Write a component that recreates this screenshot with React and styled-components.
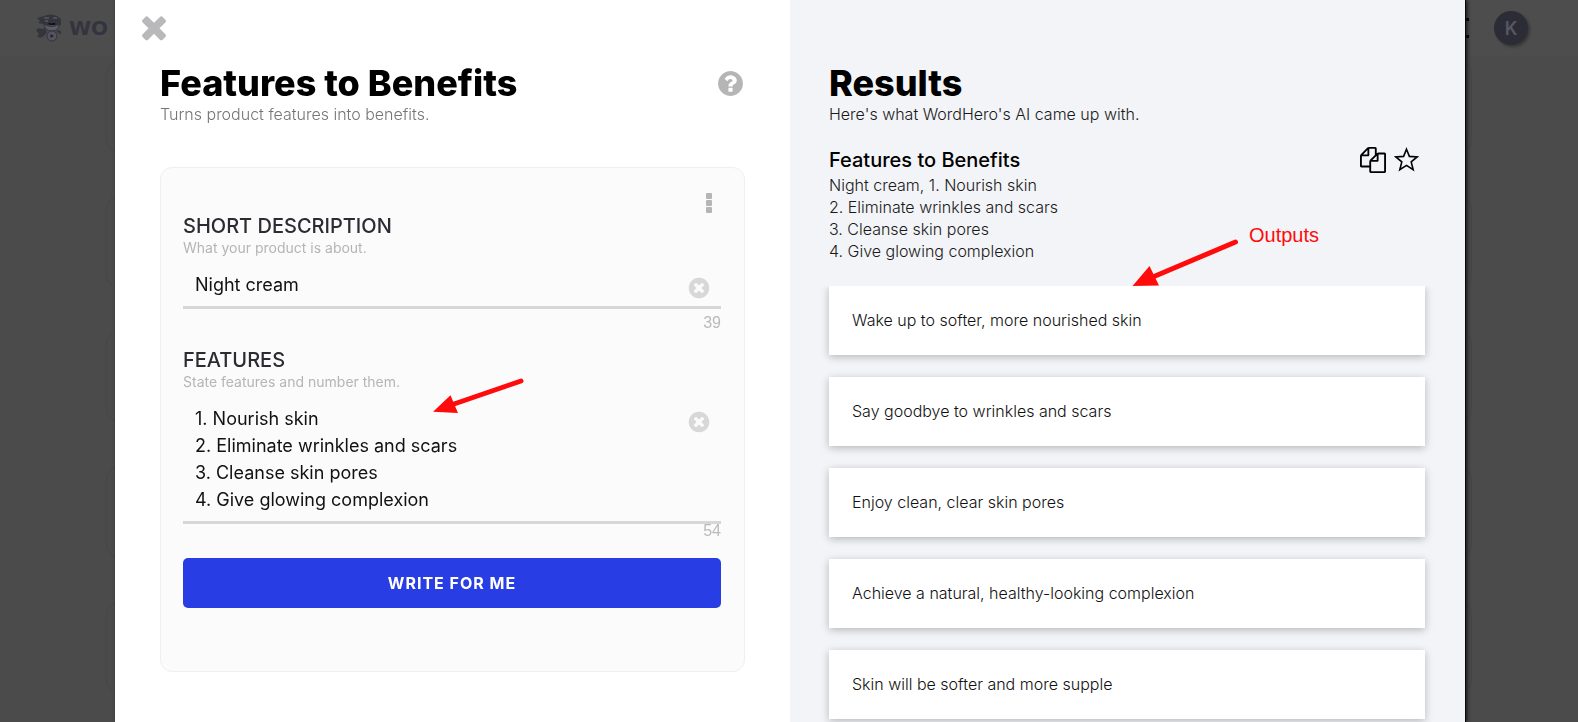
import { useState } from 'react';
import styled, { createGlobalStyle } from 'styled-components';


const GlobalStyle = createGlobalStyle`
  * { box-sizing: border-box; }
  body { margin: 0; overflow: hidden; background-color: #4b4b4b; font-family: Inter, "Liberation Sans", sans-serif; color: #000; }
  h1, h2, p, ul { margin: 0; padding: 0; }
  button { padding: 0; border: 0; background: none; font-family: inherit; cursor: pointer; }
  svg { display: block; }
`

const Page = styled.div`
  height: 100vh;  overflow: hidden;
`

const TopBar = styled.header`
  display: flex;  align-items: center;  justify-content: space-between;
  height: 56px;  padding: 0 50px 0 36px;
  background-color: #4d4d4d;
`

const Brand = styled.div`
  display: flex;  align-items: center;  column-gap: 7px;
  color: #34343f;  font: bold 20px "DejaVu Sans", sans-serif;
`

const TopBarRight = styled.div`
  display: flex;  align-items: center;  column-gap: 25px;
`

const Avatar = styled.div`
  display: flex;  align-items: center;  justify-content: center;
  width: 34px;  height: 34px;  border-radius: 50%;
  background-color: #2c2c37;  color: #575761;  box-shadow: 2px 2px 3px rgba(0,0,0,.3);
  font-size: 18px;  font-weight: 600;
`

const ToolList = styled.div`
  display: flex;  flex-direction: column;  row-gap: 45px;
  padding: 6px 106px 0;
`

const Tool = styled.div`
  height: 90px;  flex-shrink: 0;
  border: 1px solid #464646;  border-radius: 12px;
`

const Modal = styled.div`
  position: fixed;  inset: 0 113px 0 115px;
  display: grid;  grid-template-columns: 1fr 1fr;
  background-color: #fff;
  box-shadow: 1px 0 0 #08080a, 2px 0 4px #111;
`

const FormPanel = styled.section`
  position: relative;  min-width: 0;
`

const CloseRow = styled.div`
  display: flex;  padding: 9px 21px;
`

const FormBody = styled.div`
  padding: 9px 45px 0;
`

const TitleRow = styled.div`
  display: flex;  align-items: center;  justify-content: space-between;
`

const Title = styled.h1`
  font-size: 36px;  line-height: 40px;  font-weight: 800;
`

const Subtitle = styled.p`
  font-size: 16px;  line-height: 22px;  font-weight: 300;
  color: ${props => props.$color || '#1a1a1a'};
`

const FormCard = styled.form`
  display: flex;  flex-direction: column;
  margin-top: 42px;  padding: 24px 23px 63px 22px;
  background-color: #fbfbfb;  border: 1px solid #efefef;  border-radius: 12px;
`

const MoreButton = styled.button`
  align-self: flex-end;
  height: 22px;  margin-right: 9px;
`

const Label = styled.label`
  font-size: 20px;  line-height: 24px;  font-weight: 500;  color: #2b2b31;
`

const Hint = styled.p`
  margin-bottom: 13px;
  font-size: 14px;  line-height: 20px;  color: #b5b5b5;
`

const Field = styled.div`
  display: flex;  align-items: flex-start;
  padding: 0 10px 6px 12px;  border-bottom: 3px solid #d7d7d7;
`

const TextInput = styled.input`
  flex: 1;  min-width: 0;  height: 27px;  padding: 0;
  border: 0;  outline: 0;  background: none;
  font: 400 18px/27px Inter, sans-serif;  color: #111;
`

const TextArea = styled.textarea`
  flex: 1;  min-width: 0;  height: 110px;  padding: 0 0 2px;  resize: none;  overflow: hidden;
  border: 0;  outline: 0;  background: none;
  font: 400 18px/27px Inter, sans-serif;  color: #111;
`

const ClearButton = styled.button`
  margin-top: 5px;
`

const Count = styled.div`
  margin: ${props => props.$tight ? '0 0 20px' : '7px 0 18px'};
  font-family: "Liberation Sans", sans-serif;  font-size: 16px;  line-height: 14px;
  text-align: right;  color: #bababa;
`

const SubmitButton = styled.button`
  height: 50px;  border-radius: 5px;
  background-color: #283ee4;  color: #fff;
  font-size: 16px;  font-weight: 700;  letter-spacing: 1px;
`

const ResultPanel = styled.section`
  position: relative;  display: flex;  flex-direction: column;
  min-width: 0;  min-height: 0;
  background-color: #f3f4f8;
`

const ResultHead = styled.div`
  padding: 63px 40px 24px 39px;
`

const QueryRow = styled.div`
  display: flex;  align-items: center;  justify-content: space-between;
  height: 27px;  margin: 21px 0 1px;
`

const QueryTitle = styled.h2`
  font-size: 20px;  line-height: 24px;  font-weight: 500;
`

const QueryActions = styled.div`
  display: flex;  align-items: center;  column-gap: 8px;
  padding-right: 6px;
`

const QueryText = styled.p`
  font-size: 16px;  line-height: 22px;  font-weight: 300;  white-space: pre-line;  color: #1a1a1a;
`

const ResultList = styled.ul`
  flex: 1;  min-height: 0;  overflow: hidden;
  display: flex;  flex-direction: column;  row-gap: 22px;
  padding: 0 40px 0 39px;  list-style: none;
`

const Result = styled.li`
  display: flex;  align-items: center;  flex-shrink: 0;
  height: 69px;  padding: 0 23px 2px;
  background-color: #fff;  box-shadow: 0 2px 8px rgba(0,0,0,.25);
  font-size: 16px;  font-weight: 300;  color: #111;
`

// red hand-placed notes that float over the panels
const Note = styled.div`
  position: absolute;  left: ${props => props.$left}px;  top: ${props => props.$top}px;
  display: flex;  align-items: flex-start;  column-gap: 10px;
  pointer-events: none;
  font: 20px/22px "Liberation Sans", sans-serif;  color: #ff0b0b;
`

const NoteText = styled.span`
  margin-top: -14px;
`


const PATHS = {
  times: 'M1490 1322q0 40-28 68l-136 136q-28 28-68 28t-68-28l-294-294-294 294q-28 28-68 28t-68-28l-136-136q-28-28-28-68t28-68l294-294-294-294q-28-28-28-68t28-68l136-136q28-28 68-28t68 28l294 294 294-294q28-28 68-28t68 28l136 136q28 28 28 68t-28 68l-294 294 294 294q28 28 28 68z',
  question: 'M1024 1376v-192q0-14-9-23t-23-9h-192q-14 0-23 9t-9 23v192q0 14 9 23t23 9h192q14 0 23-9t9-23zm256-672q0-88-55.5-163t-138.5-116-170-41q-243 0-371 213-15 24 8 42l132 100q7 6 19 6 16 0 25-12 53-68 86-92 34-24 86-24 48 0 85.5 26t37.5 59q0 38-20 61t-68 45q-63 28-115.5 86.5t-52.5 125.5v36q0 14 9 23t23 9h192q14 0 23-9t9-23q0-19 21.5-49.5t54.5-49.5q32-18 49-28.5t46-35 44.5-48 28-60.5 12.5-81zm384 192q0 209-103 385.5t-279.5 279.5-385.5 103-385.5-103-279.5-279.5-103-385.5 103-385.5 279.5-279.5 385.5-103 385.5 103 279.5 279.5 103 385.5z',
  clear: 'M1277 1122q0-26-19-45l-181-181 181-181q19-19 19-45 0-27-19-46l-90-90q-19-19-46-19-26 0-45 19l-181 181-181-181q-19-19-45-19-27 0-46 19l-90 90q-19 19-19 46 0 26 19 45l181 181-181 181q-19 19-19 45 0 27 19 46l90 90q19 19 46 19 26 0 45-19l181-181 181 181q19 19 45 19 27 0 46-19l90-90q19-19 19-46zm387-226q0 209-103 385.5t-279.5 279.5-385.5 103-385.5-103-279.5-279.5-103-385.5 103-385.5 279.5-279.5 385.5-103 385.5 103 279.5 279.5 103 385.5z',
  copy: 'M1696 384q40 0 68 28t28 68v1216q0 40-28 68t-68 28h-960q-40 0-68-28t-28-68v-288h-544q-40 0-68-28t-28-68v-672q0-40 20-88t48-76l408-408q28-28 76-48t88-20h416q40 0 68 28t28 68v328q68-40 128-40h416zm-544 213l-299 299h299v-299zm-640-384l-299 299h299v-299zm196 647l316-316v-416h-384v416q0 40-28 68t-68 28h-416v640h512v-256q0-40 20-88t48-76zm956 804v-1152h-384v416q0 40-28 68t-68 28h-416v640h896z',
}

function Icon({ name, size, color }) {
  return (
    <svg width={size} height={size} viewBox="0 0 1792 1792" fill={color} aria-hidden="true"><path d={PATHS[name]}/></svg>
  )
}

function Dots() {
  return (
    <svg width="6" height="22" viewBox="0 0 6 22" fill="#b5b5b5" aria-hidden="true">
      <rect y="1" width="6" height="6" rx="1"/><rect y="8" width="6" height="6" rx="1"/><rect y="15" width="6" height="6" rx="1"/>
    </svg>
  )
}

function Star() {
  return (
    <svg width="25" height="25" viewBox="0 0 25 25" fill="none" stroke="#000" strokeWidth="1.6" aria-hidden="true">
      <path d="M12.5 2.2 15.4 9.4 23.2 9.9 17.2 14.9 19.2 22.7 12.5 18.4 5.8 22.7 7.8 14.9 1.8 9.9 9.6 9.4Z"/>
    </svg>
  )
}

function Mascot() {
  return (
    <svg width="26" height="28" viewBox="0 0 26 28" aria-hidden="true">
      <path d="M1 4 8 2Q14-1 21 2L25 5V11L21 12 18 11H9L7 10 2 9 4 7Z" fill="#34343f"/>
      <path d="M8 4H13M17 4H21M9 7H12" stroke="#6a6a72" strokeWidth="1"/>
      <path d="M8 10Q15 15 23 10Q23 17 16 17Q9 17 8 10Z" fill="#5c5c66" stroke="#34343f" strokeWidth="1"/>
      <path d="M12 10Q14 8 15.5 10Q17 8 20 10Q16 12 12 10Z" fill="#0c0c10"/>
      <path d="M0 16 3 14 6 15 9 14 11 18 8 22 4 24 1 22 3 20Z" fill="#34343f"/>
      <circle cx="16" cy="22" r="5" fill="#555560" stroke="#34343f" strokeWidth="1"/>
      <path d="M14.5 20 18 22 14.5 24Z" fill="#22222b"/>
      <path d="M21 18Q25 16 24 20" fill="none" stroke="#34343f" strokeWidth="2"/>
    </svg>
  )
}

function Burger() {
  return (
    <svg width="26" height="24" viewBox="0 0 26 24" fill="#000" aria-hidden="true">
      <rect y="2" width="26" height="3"/><rect y="10" width="20" height="3"/><rect y="19" width="26" height="3"/>
    </svg>
  )
}


const RESULTS = [
  'Wake up to softer, more nourished skin',
  'Say goodbye to wrinkles and scars',
  'Enjoy clean, clear skin pores',
  'Achieve a natural, healthy-looking complexion',
  'Skin will be softer and more supple',
]

const FEATURES = '1. Nourish skin\n2. Eliminate wrinkles and scars\n3. Cleanse skin pores\n4. Give glowing complexion'


function Form() {
  const [description, setDescription] = useState('Night cream')
  const [features, setFeatures] = useState(FEATURES)

  return (
    <FormPanel>
      <CloseRow>
        <button type="button" aria-label="Close"><Icon name="times" size={36} color="#b9b9bb"/></button>
      </CloseRow>
      <FormBody>
        <TitleRow>
          <Title>Features to Benefits</Title>
          <button type="button" aria-label="Help"><Icon name="question" size={29} color="#b5b5b5"/></button>
        </TitleRow>
        <Subtitle $color="#757575">Turns product features into benefits.</Subtitle>
        <FormCard onSubmit={e => e.preventDefault()}>
          <MoreButton type="button" aria-label="More"><Dots/></MoreButton>
          <Label htmlFor="description">SHORT DESCRIPTION</Label>
          <Hint>What your product is about.</Hint>
          <Field>
            <TextInput id="description" value={description} onChange={e => setDescription(e.target.value)}/>
            <ClearButton type="button" aria-label="Clear description" onClick={() => setDescription('')}><Icon name="clear" size={24} color="#d8d8d8"/></ClearButton>
          </Field>
          <Count>39</Count>
          <Label htmlFor="features">FEATURES</Label>
          <Hint>State features and number them.</Hint>
          <Field>
            <TextArea id="features" value={features} onChange={e => setFeatures(e.target.value)}/>
            <ClearButton type="button" aria-label="Clear features" onClick={() => setFeatures('')}><Icon name="clear" size={24} color="#d8d8d8"/></ClearButton>
          </Field>
          <Count $tight>54</Count>
          <SubmitButton type="submit">WRITE FOR ME</SubmitButton>
        </FormCard>
      </FormBody>
      <Note $left={317} $top={376}>
        <svg width="92" height="40" viewBox="0 0 92 40" fill="#ff0b0b" aria-hidden="true">
          <path d="M89 5 22 28" stroke="#ff0b0b" strokeWidth="5" strokeLinecap="round"/>
          <path d="M1 35.700 18.500 19.200 26 37Z"/>
        </svg>
      </Note>
    </FormPanel>
  )
}


function Results() {

  return (
    <ResultPanel>
      <ResultHead>
        <Title>Results</Title>
        <Subtitle>Here's what WordHero's AI came up with.</Subtitle>
        <QueryRow>
          <QueryTitle>Features to Benefits</QueryTitle>
          <QueryActions>
            <button type="button" aria-label="Copy"><Icon name="copy" size={26} color="#000"/></button>
            <button type="button" aria-label="Favorite"><Star/></button>
          </QueryActions>
        </QueryRow>
        <QueryText>{'Night cream, ' + FEATURES}</QueryText>
      </ResultHead>
      <ResultList>
        {RESULTS.map(text => <Result key={text}>{text}</Result>)}
      </ResultList>
      <Note $left={342} $top={238}>
        <svg width="107" height="48" viewBox="0 0 107 48" fill="#ff0b0b" aria-hidden="true">
          <path d="M103.500 4 22 38.500" stroke="#ff0b0b" strokeWidth="5" strokeLinecap="round"/>
          <path d="M.5 48 17.500 28 27 47.500Z"/>
        </svg>
        <NoteText>Outputs</NoteText>
      </Note>
    </ResultPanel>
  )
}


function App() {

  return (
    <Page>
      <GlobalStyle/>
      <TopBar>
        <Brand><Mascot/>WO</Brand>
        <TopBarRight><Burger/><Avatar>K</Avatar></TopBarRight>
      </TopBar>
      <ToolList>
        <Tool/><Tool/><Tool/><Tool/><Tool/>
      </ToolList>
      <Modal role="dialog" aria-label="Features to Benefits">
        <Form/>
        <Results/>
      </Modal>
    </Page>
  )
}


export default App;
